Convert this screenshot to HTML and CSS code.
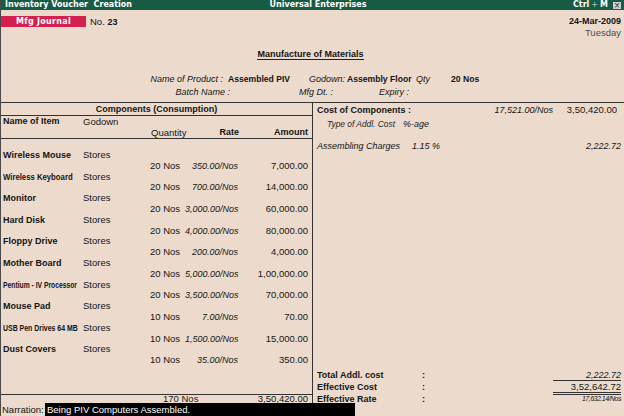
FILE: index.html
```html
<!DOCTYPE html>
<html>
<head>
<meta charset="utf-8">
<title>Inventory Voucher Creation</title>
<link rel="stylesheet" href="styles.css">
</head>
<body>
<div class="screen">
  <div class="titlebar">
    <div class="tb-left">Inventory Voucher&nbsp; Creation</div>
    <div class="tb-center">Universal Enterprises</div>
    <div class="tb-right"><span>Ctrl</span><span class="plus">+</span><span>M</span><span class="close">×</span></div>
  </div>

  <div class="head">
    <div class="head-top">
      <div class="vtype"><span class="badge">Mfg Journal</span><span class="vno">No. <b>23</b></span></div>
      <div class="vdate"><div class="date">24-Mar-2009</div><div class="day">Tuesday</div></div>
    </div>
    <div class="doc-title"><span>Manufacture of Materials</span></div>
    <div class="prod-row1">
      <i class="lbl">Name of Product :</i><b>Assembled PIV</b><i>Godown:</i><b>Assembly Floor</b><i>Qty</i><b>20 Nos</b>
    </div>
    <div class="prod-row2">
      <i class="lbl">Batch Name :</i><span></span><i>Mfg Dt. :</i><i>Expiry :</i>
    </div>
  </div>

  <div class="main">
    <div class="comp">
      <div class="comp-title">Components (Consumption)</div>
      <div class="cols">
        <b class="c-name">Name of Item</b>
        <span class="c-gd">Godown</span>
        <span class="c-qty">Quantity</span>
        <b class="c-rate">Rate</b>
        <b class="c-amt">Amount</b>
      </div>
      <div class="items">
        <div class="item"><b class="nm">Wireless Mouse</b><span class="gd">Stores</span><span class="q">20 Nos</span><i class="r">350.00/Nos</i><span class="a">7,000.00</span></div>
        <div class="item"><b class="nm"><span class="sq86">Wireless Keyboard</span></b><span class="gd">Stores</span><span class="q">20 Nos</span><i class="r">700.00/Nos</i><span class="a">14,000.00</span></div>
        <div class="item"><b class="nm">Monitor</b><span class="gd">Stores</span><span class="q">20 Nos</span><i class="r">3,000.00/Nos</i><span class="a">60,000.00</span></div>
        <div class="item"><b class="nm">Hard Disk</b><span class="gd">Stores</span><span class="q">20 Nos</span><i class="r">4,000.00/Nos</i><span class="a">80,000.00</span></div>
        <div class="item"><b class="nm">Floppy Drive</b><span class="gd">Stores</span><span class="q">20 Nos</span><i class="r">200.00/Nos</i><span class="a">4,000.00</span></div>
        <div class="item"><b class="nm">Mother Board</b><span class="gd">Stores</span><span class="q">20 Nos</span><i class="r">5,000.00/Nos</i><span class="a">1,00,000.00</span></div>
        <div class="item"><b class="nm"><span class="sq75">Pentium - IV Processor</span></b><span class="gd">Stores</span><span class="q">20 Nos</span><i class="r">3,500.00/Nos</i><span class="a">70,000.00</span></div>
        <div class="item"><b class="nm">Mouse Pad</b><span class="gd">Stores</span><span class="q">10 Nos</span><i class="r">7.00/Nos</i><span class="a">70.00</span></div>
        <div class="item"><b class="nm"><span class="sq77">USB Pen Drives 64 MB</span></b><span class="gd">Stores</span><span class="q">10 Nos</span><i class="r">1,500.00/Nos</i><span class="a">15,000.00</span></div>
        <div class="item"><b class="nm">Dust Covers</b><span class="gd">Stores</span><span class="q">10 Nos</span><i class="r">35.00/Nos</i><span class="a">350.00</span></div>
      </div>
      <div class="total">
        <span class="t-qty">170 Nos</span>
        <span class="t-amt">3,50,420.00</span>
      </div>
    </div>

    <div class="cost">
      <div class="cost-head">
        <b>Cost of Components :</b>
        <i class="ch-rate">17,521.00/Nos</i>
        <span class="ch-amt">3,50,420.00</span>
      </div>
      <div class="addl-head"><i class="ah-type">Type of Addl. Cost</i><i>%-age</i></div>
      <div class="addl-row"><i>Assembling Charges</i><i>1.15 %</i><i class="ar-val">2,222.72</i></div>

      <div class="cost-foot">
        <div class="f-row f1"><b>Total Addl. cost</b><b class="colon">:</b><i class="fv single">2,222.72</i></div>
        <div class="f-row f2"><b>Effective Cost</b><b class="colon">:</b><span class="fv double">3,52,642.72</span></div>
        <div class="f-row f3"><b>Effective Rate</b><b class="colon">:</b><i class="fv tiny">17,632.14/Nos</i></div>
      </div>
    </div>
  </div>

  <div class="narration"><span class="n-lbl">Narration:</span><span class="n-text">Being PIV Computers Assembled.</span></div>
</div>
</body>
</html>
```

FILE: styles.css
```css
* { box-sizing: border-box; margin: 0; padding: 0; }

html, body { width: 624px; height: 416px; overflow: hidden; }

body {
  background: #ecdbcc;
  font-family: "Liberation Sans", Arial, sans-serif;
  font-size: 9.5px;
  color: #141414;
}

b { font-weight: bold; font-size: 9px; }
i { font-style: italic; font-size: 9px; }

.screen {
  width: 624px;
  height: 416px;
  display: flex;
  flex-direction: column;
  border-left: 1px solid #4a4a4a;
}

/* title bar */
.titlebar {
  height: 10px;
  flex: none;
  background: #185b44;
  color: #fff;
  font-family: "DejaVu Sans", sans-serif;
  font-weight: bold;
  font-size: 8px;
  line-height: 10px;
  display: flex;
}
.tb-left { flex: 1; padding-left: 4px; white-space: nowrap; }
.tb-center { padding-left: 10px; white-space: nowrap; }
.tb-right {
  flex: 1;
  display: flex;
  justify-content: flex-end;
  align-items: center;
  gap: 2px;
  padding-right: 3px;
}
.plus { color: #a9c2b6; font-weight: normal; }
.close {
  width: 8px;
  height: 7px;
  margin-left: 3px;
  background: #cfcfcf;
  color: #333;
  font-size: 8px;
  line-height: 7px;
  text-align: center;
  font-weight: normal;
}

/* header */
.head { height: 92px; flex: none; padding-top: 6px; }
.head-top { display: flex; justify-content: space-between; height: 22px; }
.vtype { display: flex; align-items: center; height: 11px; }
.badge {
  width: 85px;
  height: 11px;
  background: #d4204f;
  color: #fff;
  font-family: "DejaVu Sans", sans-serif;
  font-weight: bold;
  font-size: 8px;
  letter-spacing: 0.3px;
  line-height: 11px;
  text-align: center;
}
.vno { margin-left: 4px; line-height: 11px; }
.vdate { text-align: right; padding-right: 3px; }
.date { font-weight: bold; font-size: 9px; line-height: 11px; }
.day { color: #4d4d4d; line-height: 11px; }

.doc-title { margin-top: 10px; text-align: center; padding-right: 4px; height: 11px; }
.doc-title span {
  display: inline-block;
  font-weight: bold;
  font-size: 9px;
  line-height: 10px;
  border-bottom: 1px solid #222;
}

.prod-row1 {
  margin-top: 14px;
  display: grid;
  grid-template-columns: 227px 81px 38px 69px 35px 1fr;
  line-height: 13px;
  white-space: nowrap;
}
.prod-row1 b { font-size: 8.6px; }
.prod-row2 {
  display: grid;
  grid-template-columns: 232px 66px 80px 1fr;
  line-height: 13px;
  white-space: nowrap;
}
.prod-row1 .lbl { text-align: right; padding-right: 5px; }
.prod-row2 .lbl { text-align: right; padding-right: 3px; }

/* main */
.main {
  height: 301px;
  flex: none;
  display: flex;
  border-top: 1px solid #333;
}
.comp {
  width: 312px;
  flex: none;
  border-right: 1px solid #333;
  display: flex;
  flex-direction: column;
}
.comp-title {
  height: 13px;
  line-height: 12px;
  text-align: center;
  font-weight: bold;
  font-size: 9px;
  border-bottom: 1px solid #333;
}
.cols {
  display: grid;
  grid-template-columns: 80px 67px 35px 53px 70px;
  grid-template-rows: 11px 11px;
  line-height: 11px;
  height: 23px;
  padding-left: 2px;
  border-bottom: 1px solid #333;
  white-space: nowrap;
}
.c-name { grid-column: 1; grid-row: 1; }
.c-gd { grid-column: 2; grid-row: 1; }
.c-qty { grid-column: 3 / span 2; grid-row: 2; padding-left: 1px; }
.c-rate { grid-column: 4; grid-row: 2; text-align: right; margin-right: -1px; }
.c-amt { grid-column: 5; grid-row: 2; text-align: right; }

.items { padding-top: 11px; padding-left: 2px; }
.item {
  display: grid;
  grid-template-columns: 80px 67px 35px 53px 70px;
  grid-template-rows: 10.8px 10.8px;
  line-height: 10.8px;
  white-space: nowrap;
}
.nm { grid-column: 1; grid-row: 1; }
.gd { grid-column: 2; grid-row: 1; }
.q { grid-column: 3; grid-row: 2; }
.r { grid-column: 4; grid-row: 2; text-align: right; }
.a { grid-column: 5; grid-row: 2; text-align: right; }

.sq86, .sq75, .sq77 { display: inline-block; transform-origin: left center; }
.sq86 { transform: scaleX(0.86); }
.sq75 { transform: scaleX(0.75); }
.sq77 { transform: scaleX(0.77); }

.total {
  margin-top: auto;
  height: 9px;
  border-top: 1px solid #333;
  display: grid;
  grid-template-columns: 162px 1fr 80px;
  line-height: 8px;
  padding-right: 4px;
  white-space: nowrap;
}
.t-qty { grid-column: 2; color: #222; }
.t-amt { grid-column: 3; text-align: right; }

/* cost panel */
.cost {
  flex: 1;
  padding: 1px 3px 0 4px;
  display: flex;
  flex-direction: column;
  white-space: nowrap;
}
.cost-head {
  display: grid;
  grid-template-columns: 1fr 100px 64px;
  line-height: 12px;
  height: 12px;
}
.ch-rate { text-align: right; padding-right: 4px; }
.ch-amt { text-align: right; padding-right: 4px; }

.addl-head {
  margin-top: 3px;
  padding-left: 10px;
  display: grid;
  grid-template-columns: 76px 1fr;
  line-height: 11px;
}
.ah-type { font-size: 8.4px; color: #1e1e1e; }

.addl-row {
  margin-top: 11px;
  display: grid;
  grid-template-columns: 95px 1fr auto;
  line-height: 11px;
}
.ar-val { text-align: right; }

.cost-foot { margin-top: auto; }
.f-row {
  display: grid;
  grid-template-columns: 105px 1fr 68px;
}
.f1 { line-height: 10px; }
.f2 { line-height: 10px; margin-top: 1px; }
.f3 { line-height: 8px; }
.fv { text-align: right; }
.single { border-bottom: 1px solid #333; }
.double { border-bottom: 3px double #333; }
.tiny { font-size: 7px; letter-spacing: -0.5px; }

/* narration */
.narration {
  height: 13px;
  flex: none;
  display: flex;
  line-height: 13px;
  white-space: nowrap;
}
.n-lbl { width: 44px; padding-left: 1px; }
.n-text {
  width: 310px;
  background: #000;
  color: #fff;
  padding-left: 2px;
}
```
